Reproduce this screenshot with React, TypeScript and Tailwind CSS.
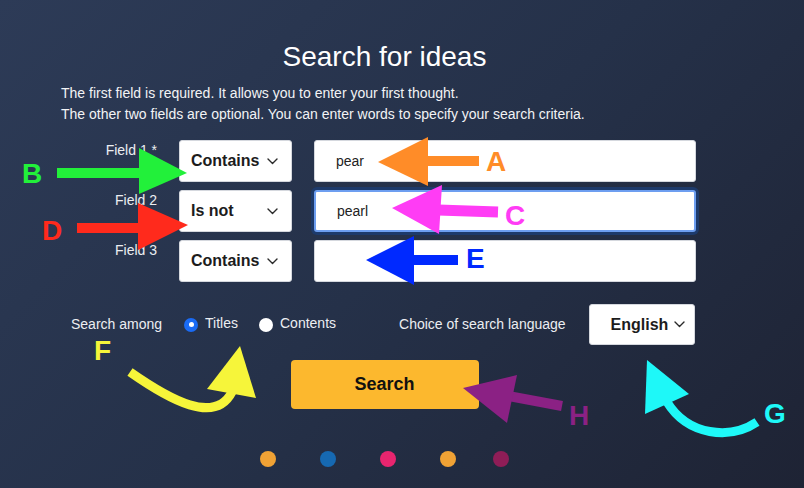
import React from "react";

const Chevron = () => (
  <svg width="11" height="7" viewBox="0 0 11 7" className="shrink-0">
    <polyline points="1,1 5.5,5.5 10,1" fill="none" stroke="#2a2a2a" strokeWidth="1.4" strokeLinecap="round" strokeLinejoin="round" />
  </svg>
);

const Select = ({ label }: { label: string }) => (
  <div className="w-[113px] h-[42px] bg-white rounded-[3px] border border-[#d5d8de] flex items-center justify-between pl-[11px] pr-[13px]">
    <span className="text-[16px] font-bold text-[#1c1c1c]">{label}</span>
    <Chevron />
  </div>
);

const Row = ({ label, sel, value, focused }: { label: string; sel: string; value: string; focused?: boolean }) => (
  <div className="flex items-start">
    <div className="w-[157px] text-right text-[14px] leading-[18px] text-[#eceef2] pt-[1px]">{label}</div>
    <div className="ml-[22px]">
      <Select label={sel} />
    </div>
    <div
      className={
        "ml-[22px] w-[382px] h-[42px] bg-white rounded-[3px] flex items-center pl-[21px] text-[14px] text-[#222] " +
        (focused
          ? "border-2 border-[#6d9ef0] shadow-[0_0_0_3px_#1d3a6b]"
          : "border border-[#d5d8de]")
      }
    >
      {value}
    </div>
  </div>
);

export default function App() {
  return (
    <div
      className="relative w-[804px] h-[488px] overflow-hidden bg-[linear-gradient(135deg,#2d3b57_0%,#253149_50%,#1e2334_100%)] text-white"
      style={{ fontFamily: '"Liberation Sans", Arial, sans-serif' }}
    >
      <div className="w-[769px] pt-[41px]">
        <h1 className="text-center text-[28px] leading-[32px] text-white">Search for ideas</h1>
        <div className="mt-[10px] pl-[61px] text-[14px] leading-[21px] text-[#f2f3f5]">
          <p>The first field is required. It allows you to enter your first thought.</p>
          <p>The other two fields are optional. You can enter words to specify your search criteria.</p>
        </div>

        <div className="mt-[15px] flex flex-col gap-[8px]">
          <Row label="Field 1 *" sel="Contains" value="pear" />
          <Row label="Field 2" sel="Is not" value="pearl" focused />
          <Row label="Field 3" sel="Contains" value="" />
        </div>

        <div className="mt-[22px] flex items-center pl-[71px] text-[14px] text-[#eceef2]">
          <span>Search among</span>
          <span className="ml-[22px] w-[14px] h-[14px] rounded-full bg-[#1a6bf5] flex items-center justify-center">
            <span className="w-[5px] h-[5px] rounded-full bg-white" />
          </span>
          <span className="ml-[7px] -mt-[3px]">Titles</span>
          <span className="ml-[21px] w-[14px] h-[14px] rounded-full bg-white" />
          <span className="ml-[7px] -mt-[3px]">Contents</span>
          <span className="ml-[63px]">Choice of search language</span>
          <div className="ml-[23px] w-[106px] h-[41px] bg-white rounded-[3px] border border-[#d5d8de] flex items-center pl-[21px] gap-[6px]">
            <span className="text-[16px] font-bold text-[#1c1c1c]">English</span>
            <Chevron />
          </div>
        </div>

        <div className="mt-[15px] flex justify-center">
          <button className="w-[188px] h-[49px] rounded-[4px] bg-[#fcb82e] text-[18px] font-bold text-[#111]">Search</button>
        </div>

        <div className="mt-[42px] flex justify-center">
          <span className="w-[16px] h-[16px] rounded-full bg-[#f0a235]" />
          <span className="ml-[44px] w-[16px] h-[16px] rounded-full bg-[#1669b2]" />
          <span className="ml-[44px] w-[16px] h-[16px] rounded-full bg-[#e8256f]" />
          <span className="ml-[44px] w-[16px] h-[16px] rounded-full bg-[#f0a235]" />
          <span className="ml-[37px] w-[16px] h-[16px] rounded-full bg-[#8f1d57]" />
        </div>
      </div>

      <svg className="absolute inset-0 pointer-events-none" width="804" height="488" viewBox="0 0 804 488">
        <g fontFamily='"Liberation Sans", Arial, sans-serif' fontWeight="bold" fontSize="28">
          {/* B green */}
          <rect x="57" y="168" width="84" height="10" fill="#22f03a" />
          <polygon points="139,148 187,173 139,194" fill="#22f03a" />
          <text x="22" y="183" fill="#22f03a">B</text>
          {/* D red */}
          <rect x="77" y="223" width="64" height="10" fill="#ff2a1c" />
          <polygon points="138,203 188,225 138,250" fill="#ff2a1c" />
          <text x="42" y="240" fill="#ff2a1c">D</text>
          {/* A orange */}
          <rect x="426" y="156" width="53" height="10" fill="#ff8c28" />
          <polygon points="428,137 378,162 428,186" fill="#ff8c28" />
          <text x="486" y="171" fill="#ff8c28">A</text>
          {/* C magenta */}
          <line x1="438" y1="210" x2="498" y2="212" stroke="#ff3cf5" strokeWidth="11" />
          <polygon points="442,185 392,208 439,234" fill="#ff3cf5" />
          <text x="505" y="225" fill="#ff3cf5">C</text>
          {/* E blue */}
          <rect x="412" y="255" width="46" height="10" fill="#0029ff" />
          <polygon points="414,236 366,260 414,285" fill="#0029ff" />
          <text x="466" y="268" fill="#0029ff">E</text>
          {/* F yellow */}
          <path d="M130,372 C170,400 215,425 232,392" fill="none" stroke="#f6f53a" strokeWidth="9" />
          <polygon points="240,346 256,398 207,389" fill="#f6f53a" />
          <text x="94" y="360" fill="#f6f53a">F</text>
          {/* G cyan */}
          <path d="M757,422 C730,440 688,436 667,402" fill="none" stroke="#1ef8f8" strokeWidth="9" />
          <polygon points="647,360 689,394 645,414" fill="#1ef8f8" />
          <text x="764" y="423" fill="#1ef8f8">G</text>
          {/* H purple */}
          <line x1="508" y1="396" x2="562" y2="406" stroke="#8b2184" strokeWidth="10" />
          <polygon points="517,375 463,388 507,423" fill="#8b2184" />
          <text x="569" y="425" fill="#8b2184">H</text>
        </g>
      </svg>
    </div>
  );
}
